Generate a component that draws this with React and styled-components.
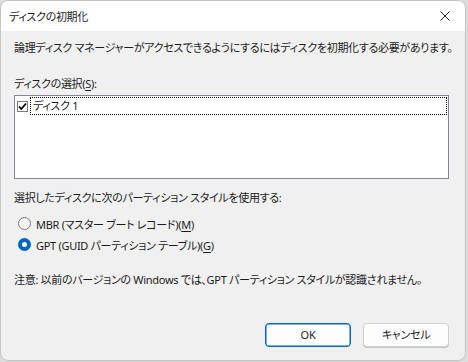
import React from "react";
import styled, { createGlobalStyle } from "styled-components";

const Global = createGlobalStyle`
  html, body { margin: 0; padding: 0; }
  body {
    width: 468px;
    height: 362px;
    overflow: hidden;
    background: #dcdcdc;
    font-family: "Noto Sans", "Noto Sans CJK JP", sans-serif;
  }
`;

const Dialog = styled.div`
  box-sizing: border-box;
  width: 466px;
  height: 361px;
  border: 1px solid #c4c4c4;
  border-radius: 8px;
  overflow: hidden;
  background: #f0f0f0;
  display: flex;
  flex-direction: column;
  color: #1b1b1b;
  font-size: 11px;
  letter-spacing: -0.3px;
  font-feature-settings: "palt";
`;

const TitleBar = styled.div`
  height: 30px;
  background: #ffffff;
  display: flex;
  align-items: center;
  justify-content: space-between;
  padding: 0 8px 0 8px;
  flex-shrink: 0;
`;

const Title = styled.span`
  font-size: 11px;
  line-height: 16px;
  margin-top: 1px;
`;

const CloseButton = styled.div`
  width: 10px;
  height: 10px;
  margin-right: 7px;
  display: flex;
`;

const Body = styled.div`
  flex: 1;
  display: flex;
  flex-direction: column;
  padding: 0 16px 0 13px;
`;

const Text = styled.div`
  line-height: 16px;
  margin-top: ${(p) => p.$mt}px;
  white-space: nowrap;
`;

const U = styled.span`
  text-decoration: underline;
  text-underline-offset: 2px;
`;

const ListBox = styled.div`
  box-sizing: border-box;
  margin-top: 3px;
  width: 435px;
  height: 84px;
  border: 1px solid #828790;
  background: #ffffff;
  padding: 1px 1px 0 2px;
`;

const ListItem = styled.div`
  display: flex;
  align-items: center;
  height: 18px;
`;

const CheckBox = styled.div`
  box-sizing: border-box;
  width: 11px;
  height: 11px;
  border: 1px solid #7a7a7a;
  background: #ffffff;
  display: flex;
  align-items: center;
  justify-content: center;
  flex-shrink: 0;
`;

const ItemLabel = styled.div`
  box-sizing: border-box;
  flex: 1;
  height: 18px;
  margin-left: 2px;
  border: 1px dotted #000000;
  padding-left: 2px;
  line-height: 15px;
`;

const RadioGroup = styled.div`
  display: flex;
  flex-direction: column;
  margin-top: 7px;
`;

const RadioRow = styled.div`
  display: flex;
  align-items: center;
  height: 21px;
  padding-left: 4px;
`;

const RadioCircle = styled.div`
  box-sizing: border-box;
  width: 13px;
  height: 13px;
  border-radius: 50%;
  border: ${(p) => (p.$checked ? "4px solid #0067c0" : "1px solid #7a7a7a")};
  background: ${(p) => (p.$checked ? "#ffffff" : "#f5f5f5")};
  margin-right: 5px;
  flex-shrink: 0;
`;

const ButtonBar = styled.div`
  display: flex;
  justify-content: flex-end;
  gap: 12px;
  margin-top: 35px;
`;

const Button = styled.div`
  box-sizing: border-box;
  width: 86px;
  height: 24px;
  border-radius: 4px;
  background: #fdfdfd;
  border: 1px solid ${(p) => (p.$primary ? "#0067c0" : "#d0d0d0")};
  box-shadow: ${(p) => (p.$primary ? "inset 0 0 0 0.5px #0067c0" : "0 1px 0 #c4c4c4")};
  display: flex;
  align-items: center;
  justify-content: center;
  line-height: 16px;
`;

export default function App() {
  return (
    <>
      <Global />
      <Dialog>
        <TitleBar>
          <Title>ディスクの初期化</Title>
          <CloseButton>
            <svg width="10" height="10" viewBox="0 0 10 10">
              <path d="M0.5 0.5 L9.5 9.5 M9.5 0.5 L0.5 9.5" stroke="#1a1a1a" strokeWidth="1" fill="none" />
            </svg>
          </CloseButton>
        </TitleBar>
        <Body>
          <Text $mt={9}>
            論理ディスク マネージャーがアクセスできるようにするにはディスクを初期化する必要があります。
          </Text>
          <Text $mt={20}>
            ディスクの選択(<U>S</U>):
          </Text>
          <ListBox>
            <ListItem>
              <CheckBox>
                <svg width="9" height="9" viewBox="0 0 9 9">
                  <path d="M1 4.5 L3.3 7 L8 1.5" stroke="#000" strokeWidth="1.8" fill="none" />
                </svg>
              </CheckBox>
              <ItemLabel>ディスク 1</ItemLabel>
            </ListItem>
          </ListBox>
          <Text $mt={11}>選択したディスクに次のパーティション スタイルを使用する:</Text>
          <RadioGroup>
            <RadioRow>
              <RadioCircle />
              <span>
                MBR (マスター ブート レコード)(<U>M</U>)
              </span>
            </RadioRow>
            <RadioRow>
              <RadioCircle $checked />
              <span>
                GPT (GUID パーティション テーブル)(<U>G</U>)
              </span>
            </RadioRow>
          </RadioGroup>
          <Text $mt={17}>
            注意: 以前のバージョンの Windows では、GPT パーティション スタイルが認識されません。
          </Text>
          <ButtonBar>
            <Button $primary>OK</Button>
            <Button>キャンセル</Button>
          </ButtonBar>
        </Body>
      </Dialog>
    </>
  );
}
